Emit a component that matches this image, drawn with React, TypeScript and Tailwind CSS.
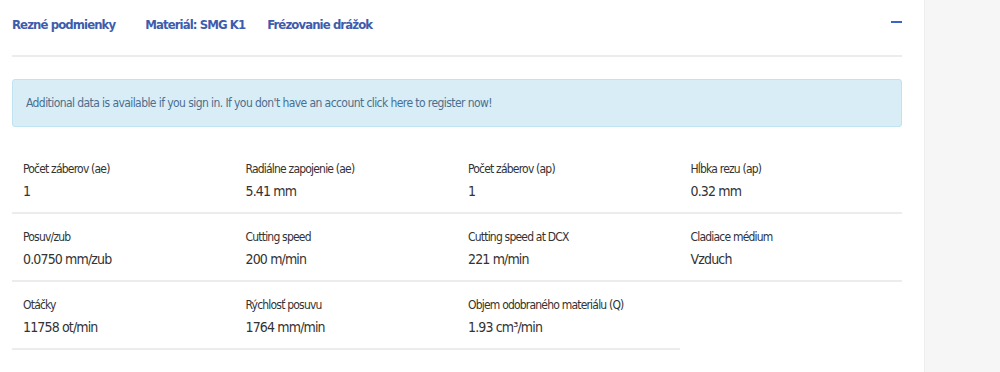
import React from "react";

const font = { fontFamily: '"DejaVu Sans Condensed", "Liberation Sans", sans-serif' };

const cells: [string, React.ReactNode][] = [
  ["Počet záberov (ae)", "1"],
  ["Radiálne zapojenie (ae)", "5.41 mm"],
  ["Počet záberov (ap)", "1"],
  ["Hĺbka rezu (ap)", "0.32 mm"],
  ["Posuv/zub", "0.0750 mm/zub"],
  ["Cutting speed", "200 m/min"],
  ["Cutting speed at DCX", "221 m/min"],
  ["Cladiace médium", "Vzduch"],
  ["Otáčky", "11758 ot/min"],
  ["Rýchlosť posuvu", "1764 mm/min"],
  ["Objem odobraného materiálu (Q)", "1.93 cm³/min"],
];

export default function App() {
  return (
    <div className="flex h-[372px] w-[1000px] bg-white" style={font}>
      <div className="w-[924px] pl-3 pr-[22px]">
        <div className="flex h-[57px] items-start justify-between border-b-2 border-[#ececec] pt-[15px]">
          <div className="flex text-[13px] font-bold leading-5 tracking-[-0.9px] text-[#3d5cad]">
            <span>Rezné podmienky</span>
            <span className="ml-[30px]">Materiál: SMG K1</span>
            <span className="ml-[22px]">Frézovanie drážok</span>
          </div>
          <div className="mt-[6px] h-[2px] w-[11px] bg-[#3b64c4]" />
        </div>
        <div className="mt-[22px] flex h-[48px] items-center rounded-[3px] border border-[#bfe3f0] bg-[#d9edf7] pl-[13px] text-[12px] tracking-[-0.58px] text-[#4a6f8f]">
          Additional data is available if you sign in. If you don't have an account click here to register now!
        </div>
        <div className="mt-[19px] grid grid-cols-4">
          {cells.map(([l, v]) => (
            <div key={l} className="h-[68px] border-b-2 border-[#ececec] pl-[11px] pt-[15px] text-[#333]">
              <div className="text-[12px] leading-4 tracking-[-0.8px]">{l}</div>
              <div className="mt-[4px] text-[14px] leading-5 tracking-[-0.85px]">{v}</div>
            </div>
          ))}
        </div>
      </div>
      <div className="flex-1 border-l border-[#eeeeee] bg-[#f6f6f6]" />
    </div>
  );
}
